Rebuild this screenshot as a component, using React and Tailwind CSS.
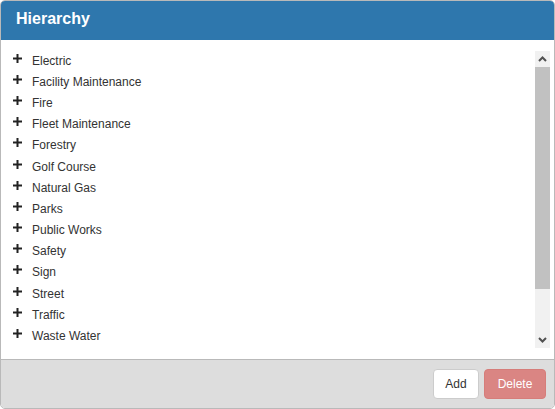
const ITEMS = [
  "Electric",
  "Facility Maintenance",
  "Fire",
  "Fleet Maintenance",
  "Forestry",
  "Golf Course",
  "Natural Gas",
  "Parks",
  "Public Works",
  "Safety",
  "Sign",
  "Street",
  "Traffic",
  "Waste Water",
];

const Plus = () => (
  <svg width="9" height="9" viewBox="0 0 9 9" className="shrink-0">
    <rect x="3.5" y="0" width="2" height="9" fill="#222" />
    <rect x="0" y="3.5" width="9" height="2" fill="#222" />
  </svg>
);

const Chevron = ({ up }) => (
  <svg width="9" height="6" viewBox="0 0 9 6">
    <path
      d={up ? "M1 5 L4.5 1.5 L8 5" : "M1 1 L4.5 4.5 L8 1"}
      stroke="#505050"
      strokeWidth="2"
      fill="none"
    />
  </svg>
);

export default function App() {
  return (
    <div
      className="w-[555px] h-[409px] bg-white"
      style={{ fontFamily: '"Liberation Sans", Arial, sans-serif' }}
    >
      <div className="w-[555px] h-[409px] flex flex-col border border-[#b9b9b9] rounded-[5px] overflow-hidden">
        {/* header */}
        <div className="h-[39px] shrink-0 bg-[#2e77ad] flex items-center pl-[15px] pb-[4px]">
          <span className="text-white font-bold text-[16px]">Hierarchy</span>
        </div>

        {/* body */}
        <div className="flex-1 flex bg-white border-b border-[#b9b9b9]">
          <ul className="flex-1 pt-[10px] pl-[12px]">
            {ITEMS.map((item) => (
              <li key={item} className="h-[21.2px] flex items-center">
                <span className="w-[19px] flex -mt-[5px]">
                  <Plus />
                </span>
                <span className="text-[12px] text-[#333]">{item}</span>
              </li>
            ))}
          </ul>
          <div className="w-[15px] mt-[11px] mb-[11px] mr-[4px] bg-[#f1f1f1] flex flex-col">
            <div className="h-[16px] flex items-center justify-center">
              <Chevron up />
            </div>
            <div className="h-[222px] bg-[#c1c1c1]" />
            <div className="flex-1" />
            <div className="h-[16px] flex items-center justify-center">
              <Chevron />
            </div>
          </div>
        </div>

        {/* footer */}
        <div className="h-[48px] shrink-0 bg-[#dddddd] flex items-center justify-end gap-[5px] pr-[8px]">
          <button className="h-[30px] w-[46px] bg-white border border-[#cccccc] rounded-[4px] text-[12px] text-[#333]">
            Add
          </button>
          <button className="h-[30px] w-[62px] bg-[#da8583] border border-[#d67d7a] rounded-[4px] text-[12px] text-white">
            Delete
          </button>
        </div>
      </div>
    </div>
  );
}
